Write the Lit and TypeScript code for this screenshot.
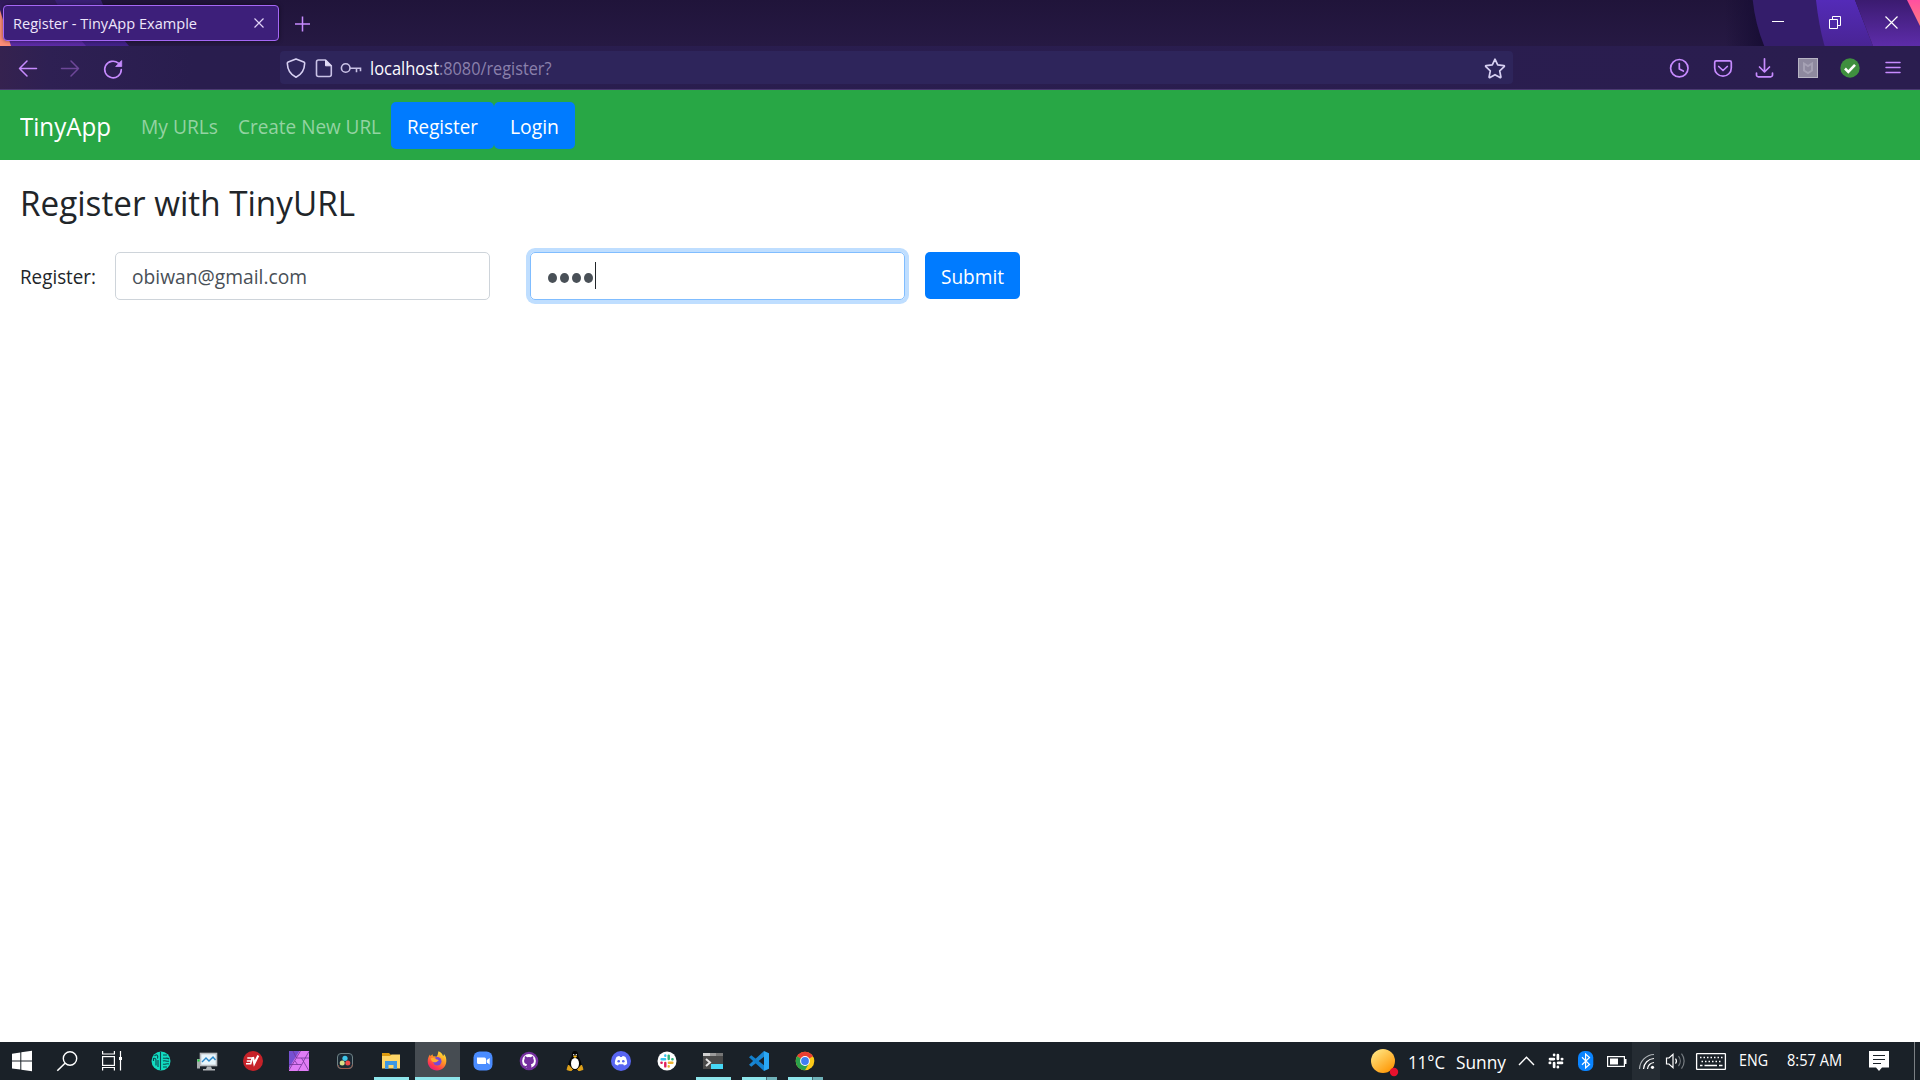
import { LitElement, html, svg, css, TemplateResult, SVGTemplateResult } from "lit";
import { customElement, property } from "lit/decorators.js";
import { styleMap } from "lit/directives/style-map.js";

/** One line of text, condensed or widened to a set advance width. */
@customElement("fit-text")
class FitText extends LitElement {
  @property({ type: Number }) w = 0;
  @property() text = "";
  @property({ type: Number }) ratio = 1;

  static styles = css`
    :host { display: block; white-space: pre; flex: none; }
    .box { display: block; }
    .run { display: inline-block; transform-origin: 0 50%; }
  `;

  firstUpdated() {
    const run = this.renderRoot.querySelector(".run") as HTMLElement;
    const natural = run.getBoundingClientRect().width;
    if (natural) this.ratio = this.w / natural;
  }

  render() {
    return html`<span class="box" style=${styleMap({ width: this.w + "px" })}
      ><span class="run" style=${styleMap({ transform: `scaleX(${this.ratio})` })}>${this.text}</span></span>`;
  }
}

const fit = (text: string, w: number, cls = "") =>
  html`<fit-text class=${cls} .text=${text} .w=${w}></fit-text>`;

const icon = (x: number, y: number, w: number, h: number, body: SVGTemplateResult): TemplateResult =>
  html`<svg class="icon" width=${w} height=${h} viewBox="${x} ${y} ${w} ${h}">${body}</svg>`;

/* ---------- browser icons (viewBoxes share the window's coordinate space) ---------- */
const L = "#c78bff";
const back = svg`<path d="M36.500 68.500H19.500M27 61L19.500 68.500l7.500 7.500" fill="none" stroke=${L} stroke-width="1.500" stroke-linecap="round" stroke-linejoin="round"/>`;
const forward = svg`<path d="M61.500 68.500H78.500M71 61L78.500 68.500l-7.500 7.500" fill="none" stroke="#6d4798" stroke-width="1.500" stroke-linecap="round" stroke-linejoin="round"/>`;
const reload = svg`<path d="M118.400 63.200A8.300 8.300 0 1 0 121.300 69.500" fill="none" stroke=${L} stroke-width="1.600" stroke-linecap="round"/><path d="M121.700 60.500v6h-6z" fill=${L} stroke=${L} stroke-width=".8" stroke-linejoin="round"/>`;
const shield = svg`<path d="M296 58.900l7.800 3c.7.300.9.700.9 1.400-.2 6.200-3 11.300-8.700 14-5.700-2.700-8.500-7.800-8.700-14 0-.7.200-1.100.9-1.400z" fill="none" stroke="#d7d0f2" stroke-width="1.600" stroke-linejoin="round"/>`;
const doc = svg`<path d="M318.500 60h7l5.800 5.800v8.700a2 2 0 0 1-2 2h-10.800a2 2 0 0 1-2-2v-12.500a2 2 0 0 1 2-2z" fill="none" stroke="#c9c2e6" stroke-width="1.600" stroke-linejoin="round"/><path d="M325.500 60v5.800h5.800z" fill="#e0daf5" stroke="#e0daf5"/>`;
const key = svg`<circle cx="345.700" cy="68" r="4.300" fill="none" stroke="#c9c2e6" stroke-width="1.600"/><path d="M350 68.200h10.500v3M356.500 68.200v4" fill="none" stroke="#c9c2e6" stroke-width="1.600"/>`;
const star = svg`<path d="M1495 59.200l2.700 5.600 6.100.8c.7.100.8.600.4 1l-4.500 4.200 1.200 6.200c0 .6-.4.800-.9.600l-5-2.900-5 2.900c-.5.200-1 0-.9-.6l1.200-6.200-4.500-4.200c-.4-.4-.3-.9.400-1l6.100-.8z" fill="none" stroke="#d7d0f2" stroke-width="1.700" stroke-linejoin="round"/>`;
const history = svg`<g fill="none" stroke=${L} stroke-width="1.700" stroke-linecap="round"><circle cx="1679.300" cy="68.200" r="8.700"/><path d="M1679.300 63.500v5.500l4 2" stroke-linejoin="round"/></g>`;
const pocket = svg`<g fill="none" stroke=${L} stroke-width="1.700" stroke-linecap="round" stroke-linejoin="round"><path d="M1716.300 60.800h13.400c1 0 1.600.6 1.600 1.600v5.500a8.300 8.300 0 0 1-16.600 0v-5.500c0-1 .6-1.600 1.600-1.600z"/><path d="M1718.700 66.500l4.300 4 4.300-4"/></g>`;
const download = svg`<path d="M1764.500 58.800v13M1759.500 67l5 5 5-5M1756.500 73v2a1.800 1.800 0 0 0 1.800 1.800h12.400a1.800 1.800 0 0 0 1.800-1.800v-2" fill="none" stroke=${L} stroke-width="1.700" stroke-linecap="round" stroke-linejoin="round"/>`;
const mcafee = svg`<rect x="1798.500" y="58.500" width="19" height="19" fill="#8e899f" stroke="#b7b4c4"/><path d="M1804 63.500l4 2.500 4-2.500v7l-4 2.500-4-2.500z" fill="none" stroke="#a5a1b4" stroke-width="2"/>`;
const okBadge = svg`<circle cx="1850" cy="68" r="9.700" fill="#3f8f3f"/><path d="M1845 68.500l3.300 3.300 6.700-7" fill="none" stroke="#fff" stroke-width="2.600"/>`;
const menu = svg`<path d="M1886 62.500h14M1886 67.500h14M1886 72.500h14" stroke=${L} stroke-width="1.500" stroke-linecap="round"/>`;

/* ---------- taskbar icons ---------- */
const slackShape = (c: string[]) => svg`
  <g stroke-width="2.700" stroke-linecap="round" fill="none">
    <path d="M-6-1.900h3.900M-1.900-6.200v.3" stroke=${c[0]}/><path d="M1.900-6v3.900M6.200-1.900h-.3" stroke=${c[1]}/>
    <path d="M6 1.900h-3.900M1.900 6.200v-.3" stroke=${c[2]}/><path d="M-1.900 6v-3.900M-6.200 1.900h.3" stroke=${c[3]}/>
  </g>`;

const windowsLogo = svg`<path d="M12 1053.700l8.300-1.200v8H12zM21.300 1052.300l10.700-1.500v9.700H21.300zM12 1061.500h8.300v8.100L12 1068.400zM21.300 1061.500H32v9.700l-10.700-1.500z" fill="#fff"/>`;
const search = svg`<circle cx="70" cy="1058.500" r="6.700" fill="none" stroke="#fff" stroke-width="1.400"/><path d="M65 1063.300l-7.700 7.500" stroke="#fff" stroke-width="1.600"/>`;
const taskView = svg`<g fill="none" stroke="#fff" stroke-width="1.200"><rect x="102.600" y="1056.600" width="11.800" height="8.800"/><path d="M102.600 1051v3h11.800v-3M102.600 1070.500v-3h11.800v3M120.500 1051v19.500"/></g><rect x="119" y="1057" width="3" height="3" fill="#fff"/>`;
const brain = svg`<circle cx="161" cy="1061" r="9.500" fill="#12dcc0"/><path d="M160.500 1052v18M154.500 1056c2-2.500 4-.5 3 2.500M153.500 1061v-2.500c2-1 2.500 1 2.500 2v5M158 1060v7M163 1055h4m-4 3c2 1 4-1 6 1m-6 2c2-1 4 1 6 0m-6 3c2 1 4-1 6 0m-6 3h4" fill="none" stroke="#0b4950" stroke-width="1.100"/>`;
const monitor = svg`<rect x="200.500" y="1053.500" width="16" height="12" fill="#e8f5fb" stroke="#b9bcc0" stroke-width="1.600"/><path d="M202 1062l4-4 3 3 4-4 2.500 3" fill="none" stroke="#2b87c8" stroke-width="1.400"/><path d="M207 1066.500h4l1 2.500h3v1.500h-12v-1.500h3z" fill="#aeb2b5"/><rect x="197" y="1059" width="3" height="9.500" fill="#a8adaf"/><path d="M197.500 1060.500h2" stroke="#19d839" stroke-width="2"/>`;
const expressVpn = svg`<circle cx="253" cy="1061" r="10" fill="#c62229"/><path d="M247.300 1058h5l-1.600 5.700h-4.700M246.800 1061h4.200" fill="none" stroke="#fff" stroke-width="1.600"/><path d="M253 1057l1.300 6.500 4-8" fill="none" stroke="#fff" stroke-width="2.100"/>`;
const affinity = svg`<rect x="289" y="1051" width="20" height="20" fill="#e07cf5"/><path d="M289 1051h10.500l-10.500 17z" fill="#7650d2"/><path d="M300.500 1051l-11.500 19M296.500 1058h12.500M293 1051l3.500 7M309 1051.500l-5.500 9.500M301.500 1058l7.500 13M289 1064.500h12.500M303.500 1061.500l-5.500 9.500M295 1061l2.500 3.500" fill="none" stroke="#743398" stroke-width=".8"/>`;
const resolve = svg`<rect x="337.500" y="1053.500" width="15" height="15" rx="3.500" fill="#1b2a35" stroke="#6f8286" stroke-width="1"/><path d="M338 1065c.5 2.500 1.500 3.500 4 3.500h6c3 0 4-1.500 4.500-4" fill="none" stroke="#9b5a4c"/><circle cx="345" cy="1058.300" r="2.600" fill="#3fc6ea"/><circle cx="342.200" cy="1063" r="2.500" fill="#d7e08b"/><circle cx="347.800" cy="1063" r="2.500" fill="#ef4b4b"/>`;
const folder = svg`<path d="M382 1053h7l2 2h9v6h-18z" fill="#dd9b0f"/><path d="M382 1056h8l1.500-1.500h8.500v14h-18z" fill="#ffd667"/><path d="M385 1069v-8h12v8h-3.500v-4h-5v4z" fill="#3d97e3"/>`;
const firefox = svg`<defs><linearGradient id="ff" x1=".8" y1="0" x2=".2" y2="1"><stop offset="0" stop-color="#ffe93a"/><stop offset=".4" stop-color="#ff9725"/><stop offset=".75" stop-color="#ff3b4b"/><stop offset="1" stop-color="#e31587"/></linearGradient></defs>
  <path d="M438.500 1051.300c2.800 1.300 4.300 3.300 4.500 4.700 1-.5 1-1.500.8-2.300 2 2 2.700 4.800 2.500 7.800-.4 5.300-4.300 9-9.300 9s-9.300-4-9.300-9c0-2.800.8-5 2.300-7l.5 1.800c.5-.8 1-1.500 2-2l.5 2c1.500-.3 2.500 0 3.500.5 1.500-1.500 1.300-3.500 2-5.500z" fill="url(#ff)"/><circle cx="437.300" cy="1061.300" r="4.200" fill="#7947d4"/><path d="M430.500 1058.500c2.500-1.500 5-.5 6 1 1 0 2 .5 2.500 1-1.500.3-2 1.500-3.500 1.700-1.700.3-2.700-.7-3.500-.7z" fill="#ffab2e"/>`;
const zoomApp = svg`<rect x="473.500" y="1051.500" width="19" height="19" rx="6" fill="#4a8cff"/><path d="M477 1057.500h7.500a1.500 1.500 0 0 1 1.500 1.500v5h-7.500a1.500 1.500 0 0 1-1.500-1.500zM486.700 1060l3-2v6.500l-3-2z" fill="#fff"/>`;
const github = svg`<circle cx="529" cy="1061" r="9.300" fill="#752f9f"/><circle cx="529" cy="1061" r="6.900" fill="#fff"/><path d="M525 1056l2.400 1.200a7 7 0 0 1 3.200 0l2.400-1.200c.4 1.200.4 1.900.2 2.500 1.500 2.600.6 5.400-2.300 5.800.4.600.5 1.200.5 2.200v2.500h-4.800v-2c-1.500.3-2.200-.5-2.900-1.600 1.200 0 1.500.9 2.900.4 0-.6.200-1.100.5-1.500-2.900-.4-3.800-3.200-2.300-5.800-.2-.6-.2-1.300.2-2.500z" fill="#752f9f"/>`;
const tux = svg`<path d="M575 1051c2.500 0 3.200 2 3.200 4.500 0 2.200 3.300 4.500 3.300 9.500 0 3.500-2 5-6.500 5s-6.500-1.500-6.500-5c0-5 3.300-7.300 3.300-9.500 0-2.500.7-4.500 3.200-4.500z" fill="#050505"/><ellipse cx="575" cy="1063.500" rx="4" ry="5.600" fill="#fff"/><path d="M573 1056.500l2-1.200 2.200 1.200-2.200 1.500z" fill="#f7b719"/><circle cx="573.700" cy="1054.800" r=".7" fill="#fff"/><circle cx="576.300" cy="1054.800" r=".7" fill="#fff"/><path d="M568.500 1065l4 4.500-1.500 1.200-4-1zM581.500 1065l-4 4.500 1.500 1.200 4-1.200z" fill="#e0a21a" stroke="#e0a21a" stroke-linejoin="round"/>`;
const discord = svg`<circle cx="621" cy="1061" r="10" fill="#5865f2"/><path d="M616.500 1057c1-.6 2-.9 3-1l.5.9h2l.5-.9c1 .1 2 .4 3 1 1.300 2.200 1.800 4.500 1.600 7-1 .8-2 1.200-3.100 1.500l-.8-1.200h-4.400l-.8 1.200c-1.100-.3-2.100-.7-3.100-1.500-.2-2.500.3-4.800 1.600-7z" fill="#fff"/><circle cx="618.700" cy="1061.300" r="1.300" fill="#5865f2"/><circle cx="623.300" cy="1061.300" r="1.300" fill="#5865f2"/>`;
const slack = svg`<circle cx="667" cy="1061" r="9.500" fill="#fff"/><g transform="translate(667 1061) scale(.9)">${slackShape(["#36c5f0", "#2eb67d", "#ecb22e", "#e01e5a"])}</g>`;
const terminal = svg`<rect x="703" y="1053" width="20" height="16" fill="#494949"/><path d="M703 1053h7v3h-7z" fill="#d0d0d0"/><path d="M710 1053h6v3h-6z" fill="#9a9a9a"/><path d="M716 1053h7v3h-7z" fill="#777"/><path d="M706 1059l4 3.500-4 3.500" fill="none" stroke="#e4e4e4" stroke-width="2"/><rect x="711" y="1064" width="12" height="5" fill="#47d7f5"/>`;
const vscode = svg`<path d="M749 1064.700l15-13.700v5.800l-12.700 10z" fill="#1a86d2"/><path d="M749 1057.300l2.300-2 12.700 10v5.700z" fill="#1280cd"/><path d="M764 1051l5 2.300v15.400l-5 2.300z" fill="#2aa7f3"/>`;
const chrome = svg`<circle cx="805" cy="1061" r="9.300" fill="#fbc918"/><path d="M805 1061l-8.050-4.650a9.300 9.300 0 0 1 16.100 0z" fill="#ea3e34"/><path d="M796.950 1056.350a9.300 9.300 0 0 0 8.050 13.950l4-7z" fill="#2ba24c"/><circle cx="805" cy="1061" r="4.900" fill="#fff"/><circle cx="805" cy="1061" r="3.900" fill="#3f7df2"/>`;

type App = { body: SVGTemplateResult; state?: string };
const apps: App[] = [
  { body: windowsLogo }, { body: search }, { body: taskView }, { body: brain }, { body: monitor },
  { body: expressVpn }, { body: affinity }, { body: resolve }, { body: folder, state: "open" },
  { body: firefox, state: "active" }, { body: zoomApp }, { body: github }, { body: tux },
  { body: discord }, { body: slack }, { body: terminal, state: "open" },
  { body: vscode, state: "open many" }, { body: chrome, state: "open many" },
];

/* ---------- tray ---------- */
const weather = svg`<defs><linearGradient id="sun" x1=".2" y1=".1" x2=".8" y2=".9"><stop offset="0" stop-color="#ffe07a"/><stop offset="1" stop-color="#ff9a0a"/></linearGradient></defs><circle cx="1383" cy="1061" r="12" fill="url(#sun)"/><circle cx="1394" cy="1072" r="4.200" fill="#e8112d"/>`;
const chevron = svg`<path d="M1518.500 1065l7.500-7.700 7.500 7.700" fill="none" stroke="#fff" stroke-width="1.400"/>`;
const traySlack = svg`<g transform="translate(1556 1061)">${slackShape(["#fff", "#fff", "#fff", "#fff"])}</g>`;
const bluetooth = svg`<rect x="1578" y="1051" width="15.300" height="20" rx="6.500" fill="#0a84ff"/><path d="M1582 1057.300l7.500 7.200-3.900 3.500v-14l3.900 3.500-7.500 7.200" fill="none" stroke="#fff" stroke-width="1.200"/>`;
const battery = svg`<rect x="1607.600" y="1056.600" width="16.800" height="9.800" fill="none" stroke="#fff" stroke-width="1.200"/><path d="M1610 1058.500h8v6h-8zM1625 1059h1.500v5h-1.500z" fill="#fff"/>`;
const wifi = svg`<g fill="none" stroke="#fff" stroke-width="1.200"><path d="M1647.500 1069a7 7 0 0 1 6.500-6.500M1643.500 1069a11 11 0 0 1 10.500-10.500"/><path d="M1639.500 1069a15 15 0 0 1 14.500-14.500" stroke="#aeb3b7"/></g><circle cx="1652.500" cy="1067.300" r="1.600" fill="#fff"/>`;
const speaker = svg`<path d="M1666.500 1058h2.500l4-3.700v13.400l-4-3.700h-2.500z" fill="none" stroke="#fff" stroke-width="1.200"/><path d="M1675.500 1058.500a4 4 0 0 1 0 5" fill="none" stroke="#fff" stroke-width="1.200"/><path d="M1678.500 1056a8 8 0 0 1 0 10M1681.500 1053.500a12 12 0 0 1 0 15" fill="none" stroke="#777d82" stroke-width="1.200"/>`;
const keyboard = svg`<rect x="1696.600" y="1053.600" width="28.800" height="15.800" rx=".5" fill="none" stroke="#fff" stroke-width="1.300"/><path d="M1700 1057.500h23M1701.500 1061.500h21" stroke="#fff" stroke-width="1.300" stroke-dasharray="1.500 2"/><path d="M1700 1065.500h2.500M1704.500 1065.500h12.500M1719 1065.500h3.500" stroke="#fff" stroke-width="1.300"/>`;
const notification = svg`<path d="M1869 1051h20v16.500h-7l-3 3.500-3-3.500h-7z" fill="#fff"/><path d="M1873 1055.500h12M1873 1059.500h12M1873 1063.500h8" stroke="#1a2128" stroke-width="1.200"/>`;

@customElement("app-root")
class AppRoot extends LitElement {
  static styles = css`
    :host {
      display: flex; flex-direction: column; width: 1920px; height: 1080px; overflow: hidden;
      background: #fff; font-family: "Open Sans", "Noto Sans", sans-serif; color: #212529;
    }
    .icon { display: block; flex: none; }
    .chrome { position: relative; height: 90px; flex: none; background: #22163c; }
    .art { position: absolute; left: 0; top: 0; display: block; }
    .layer { position: relative; display: flex; flex-direction: column; }
    .tabs { height: 46px; display: flex; align-items: flex-start; }
    .tab {
      box-sizing: border-box; width: 276px; height: 36px; margin: 5px 0 0 3px; padding-left: 9px;
      display: flex; align-items: center; border: 1px solid #a567f5; border-radius: 4px;
      background: #3d1f7a; box-shadow: 0 0 4px rgba(0,0,0,.5);
    }
    .tabtitle { color: #eee6fb; font-size: 15px; line-height: 34px; }
    .grow { flex: 1; }
    .bar { height: 43px; display: flex; align-items: flex-start; }
    .url {
      box-sizing: border-box; width: 1233px; height: 33px; margin-top: 5px; display: flex;
      align-items: center; border-radius: 4px; background: #2e255b;
    }
    .host, .path { font-size: 17.600px; line-height: 33px; padding-top: 2px; }
    .host { color: #fbfbfe; }
    .path { color: #8a80ab; }
    .nav {
      box-sizing: border-box; height: 70px; flex: none; display: flex; align-items: center;
      padding: 1px 0 0 20px; background: #28a745;
    }
    .brand { font-size: 25px; line-height: 40px; color: #fff; margin-right: 30px; padding-top: 1px; }
    .link { font-size: 20px; line-height: 30px; color: #94d3a2; margin-right: 20px; padding-top: 2px; }
    .link.last { margin-right: 10px; }
    .btn {
      box-sizing: border-box; height: 47px; display: flex; align-items: center; justify-content: center;
      border-radius: 5px; background: #007bff; color: #fff; font-size: 20px; line-height: 30px; padding-top: 2px;
    }
    .register { width: 103px; } .login { width: 81px; } .submit { width: 95px; margin: 0 0 1px 20px; }
    .page { flex: 1; padding: 22px 20px 0; }
    .title { font-size: 35px; line-height: 42px; font-weight: 400; margin: 0 0 28px; }
    .form { display: flex; align-items: center; height: 48px; }
    .label { font-size: 20px; line-height: 30px; margin-right: 19px; padding-top: 2px; }
    .input {
      box-sizing: border-box; width: 375px; height: 48px; display: flex; align-items: center;
      padding: 2px 0 0 15.500px; border: 1px solid #ced4da; border-radius: 5px; color: #495057;
      font-size: 20px; line-height: 30px;
    }
    .focus { margin-left: 40px; padding: 0 0 0 16.500px; border-color: #80bdff; box-shadow: 0 0 0 4px #bfdeff; gap: 3.300px; }
    .dot { width: 9px; height: 10px; margin-top: 4px; border-radius: 50%; background: #495057; }
    .caret { width: 1px; height: 27px; margin: -1px 0 0 -2px; background: #212529; }
    .taskbar { height: 38px; flex: none; display: flex; background: #1a2128; color: #fff; }
    .app { width: 46px; height: 38px; display: grid; }
    .app > * { grid-area: 1 / 1; }
    .active { background: linear-gradient(#464c52, #464c52) 1px 0 / 45px 38px no-repeat; }
    .line { align-self: end; justify-self: center; width: 35px; height: 3px; background: #8ee5eb; }
    .active .line { width: 45px; justify-self: end; }
    .many .line { background: linear-gradient(90deg, #8ee5eb 24px, #47696f 24px 25px, #6fb2b9 25px); }
    .temp { font-size: 17.800px; line-height: 41px; }
    .clock { font-size: 15.400px; line-height: 38px; }
    .wifi { background: #252c33; display: flex; }
    .pad-a { margin-right: 11px; } .pad-b { margin-right: 9px; }
    .pad-c { margin-left: 10px; margin-right: 19px; } .pad-d { margin-right: 21px; }
    .edge { width: 1px; height: 38px; margin-left: 20px; background: #7b8084; }
  `;

  private art() {
    return html`<svg class="art" width="1920" height="90" viewBox="0 0 1920 90">
      <defs>
        <linearGradient id="base" x1="0" x2="0" y1="0" y2="1"><stop offset="0" stop-color="#20143a"/><stop offset="1" stop-color="#261943"/></linearGradient>
        <linearGradient id="fade" x1="0" x2="1"><stop offset="0" stop-color="#170d34" stop-opacity="0"/><stop offset="1" stop-color="#170d34"/></linearGradient>
        <linearGradient id="violet" x1="0" x2="0" y1="0" y2="1"><stop offset="0" stop-color="#3b1b70"/><stop offset="1" stop-color="#5d2ca9"/></linearGradient>
        <linearGradient id="left" x1="0" x2="0" y1="0" y2="1"><stop offset="0" stop-color="#2f1a58"/><stop offset="1" stop-color="#5d2ca9"/></linearGradient>
        <linearGradient id="leftblue" x1="0" x2="0" y1="0" y2="1"><stop offset="0" stop-color="#3a2075"/><stop offset="1" stop-color="#43228a"/></linearGradient>
        <linearGradient id="indigo" x1="0" x2="0" y1="0" y2="1"><stop offset="0" stop-color="#542bb8"/><stop offset="1" stop-color="#492494"/></linearGradient>
        <linearGradient id="pink" x1="0" x2="0" y1="0" y2="1"><stop offset="0" stop-color="#ff4fa0"/><stop offset="1" stop-color="#ff7d80"/></linearGradient>
        <linearGradient id="toolbar" x1="0" x2="1"><stop offset="0" stop-color="#35224f"/><stop offset=".025" stop-color="#2e2053"/><stop offset=".1" stop-color="#291d4e"/><stop offset="1" stop-color="#2a1d4f"/></linearGradient>
      </defs>
      <rect width="1920" height="46" fill="url(#base)"/>
      <path d="M0 0h101c7 18 17 33 28 46H0z" fill="url(#leftblue)"/>
      <path d="M0 0h55q12 26 31 46H0z" fill="url(#left)"/>
      <path d="M0 10l11 36H0z" fill="#ff8d78"/>
      <path d="M1725 0h28q3 24 12 46h-40z" fill="url(#fade)"/>
      <path d="M1752.700 0h64l8 46h-60.500q-9-22-11.500-46z" fill="#341d6b"/>
      <path d="M1816 0h39l18 46h-48.500q-6-22-8.500-46z" fill="url(#indigo)"/>
      <path d="M1855 0h65v46h-47z" fill="url(#violet)"/>
      <path d="M1907 0h13v26z" fill="url(#pink)"/>
      <rect y="46" width="1920" height="44" fill="url(#toolbar)"/>
      <rect y="89" width="1920" height="1" fill="#4b3a72"/>
    </svg>`;
  }

  render() {
    return html`
      <div class="chrome">
        ${this.art()}
        <div class="layer">
          <div class="tabs">
            <div class="tab">
              ${fit("Register - TinyApp Example", 184, "tabtitle")}
              <span class="grow"></span>
              ${icon(247, 12, 31, 22, svg`<path d="M254.500 18.500l9 9M263.500 18.500l-9 9" stroke="#e0d2f7" stroke-width="1.200"/>`)}
            </div>
            ${icon(279, 0, 60, 46, svg`<path d="M295 24h15M302.500 16.500v15" stroke=${L} stroke-width="1.500"/>`)}
            <span class="grow"></span>
            ${icon(1750, 0, 57, 46, svg`<path d="M1772 21.500h12" stroke="#fff"/>`)}
            ${icon(1807, 0, 56, 46, svg`<path d="M1829.500 19.500h8v9h-8zM1832.500 19.500v-3h8v9h-3" fill="none" stroke="#fff"/>`)}
            ${icon(1863, 0, 57, 46, svg`<path d="M1885.500 16.500l12 12M1897.500 16.500l-12 12" stroke="#fff" stroke-width="1.200"/>`)}
          </div>
          <div class="bar">
            ${icon(0, 46, 50, 43, back)}${icon(50, 46, 45, 43, forward)}${icon(95, 46, 185, 43, reload)}
            <div class="url">
              ${icon(280, 51, 30, 33, shield)}${icon(310, 51, 27, 33, doc)}${icon(337, 51, 32.500, 33, key)}
              ${fit("localhost", 69, "host")}${fit(":8080/register?", 112.500, "path")}
              <span class="grow"></span>
              ${icon(1475, 51, 38, 33, star)}
            </div>
            <span class="grow"></span>
            ${icon(1660, 46, 40, 43, history)}${icon(1700, 46, 44, 43, pocket)}${icon(1744, 46, 42, 43, download)}
            ${icon(1786, 46, 44, 43, mcafee)}${icon(1830, 46, 42, 43, okBadge)}${icon(1872, 46, 48, 43, menu)}
          </div>
        </div>
      </div>
      <nav class="nav">
        ${fit("TinyApp", 91, "brand")}
        ${fit("My URLs", 77, "link")}
        ${fit("Create New URL", 143, "link last")}
        <div class="btn register">${fit("Register", 71)}</div>
        <div class="btn login">${fit("Login", 49)}</div>
      </nav>
      <main class="page">
        <h3 class="title">${fit("Register with TinyURL", 335)}</h3>
        <div class="form">
          ${fit("Register:", 76, "label")}
          <div class="input">${fit("obiwan@gmail.com", 175)}</div>
          <div class="input focus">
            <span class="dot"></span><span class="dot"></span><span class="dot"></span><span class="dot"></span><span class="caret"></span>
          </div>
          <div class="btn submit">${fit("Submit", 63)}</div>
        </div>
      </main>
      <footer class="taskbar">
        ${apps.map((a, i) => html`<div class="app ${a.state ?? ""}">
          ${icon(i * 46, 1042, 46, 38, a.body)}
          ${a.state ? html`<span class="line"></span>` : ""}
        </div>`)}
        <span class="grow"></span>
        ${icon(1365, 1042, 42.500, 38, weather)}
        ${fit("11°C", 37, "temp pad-a")}${fit("Sunny", 50, "temp pad-b")}
        ${icon(1514.500, 1042, 26.500, 38, chevron)}${icon(1541, 1042, 31, 38, traySlack)}
        ${icon(1572, 1042, 28, 38, bluetooth)}${icon(1600, 1042, 32, 38, battery)}
        <div class="wifi">${icon(1632, 1042, 28, 38, wifi)}</div>
        ${icon(1660, 1042, 31, 38, speaker)}${icon(1691, 1042, 38, 38, keyboard)}
        ${fit("ENG", 29, "clock pad-c")}${fit("8:57 AM", 55, "clock pad-d")}
        ${icon(1863, 1042, 31, 38, notification)}
        <span class="edge"></span>${icon(1915, 1042, 5, 38, svg``)}
      </footer>
    `;
  }
}
